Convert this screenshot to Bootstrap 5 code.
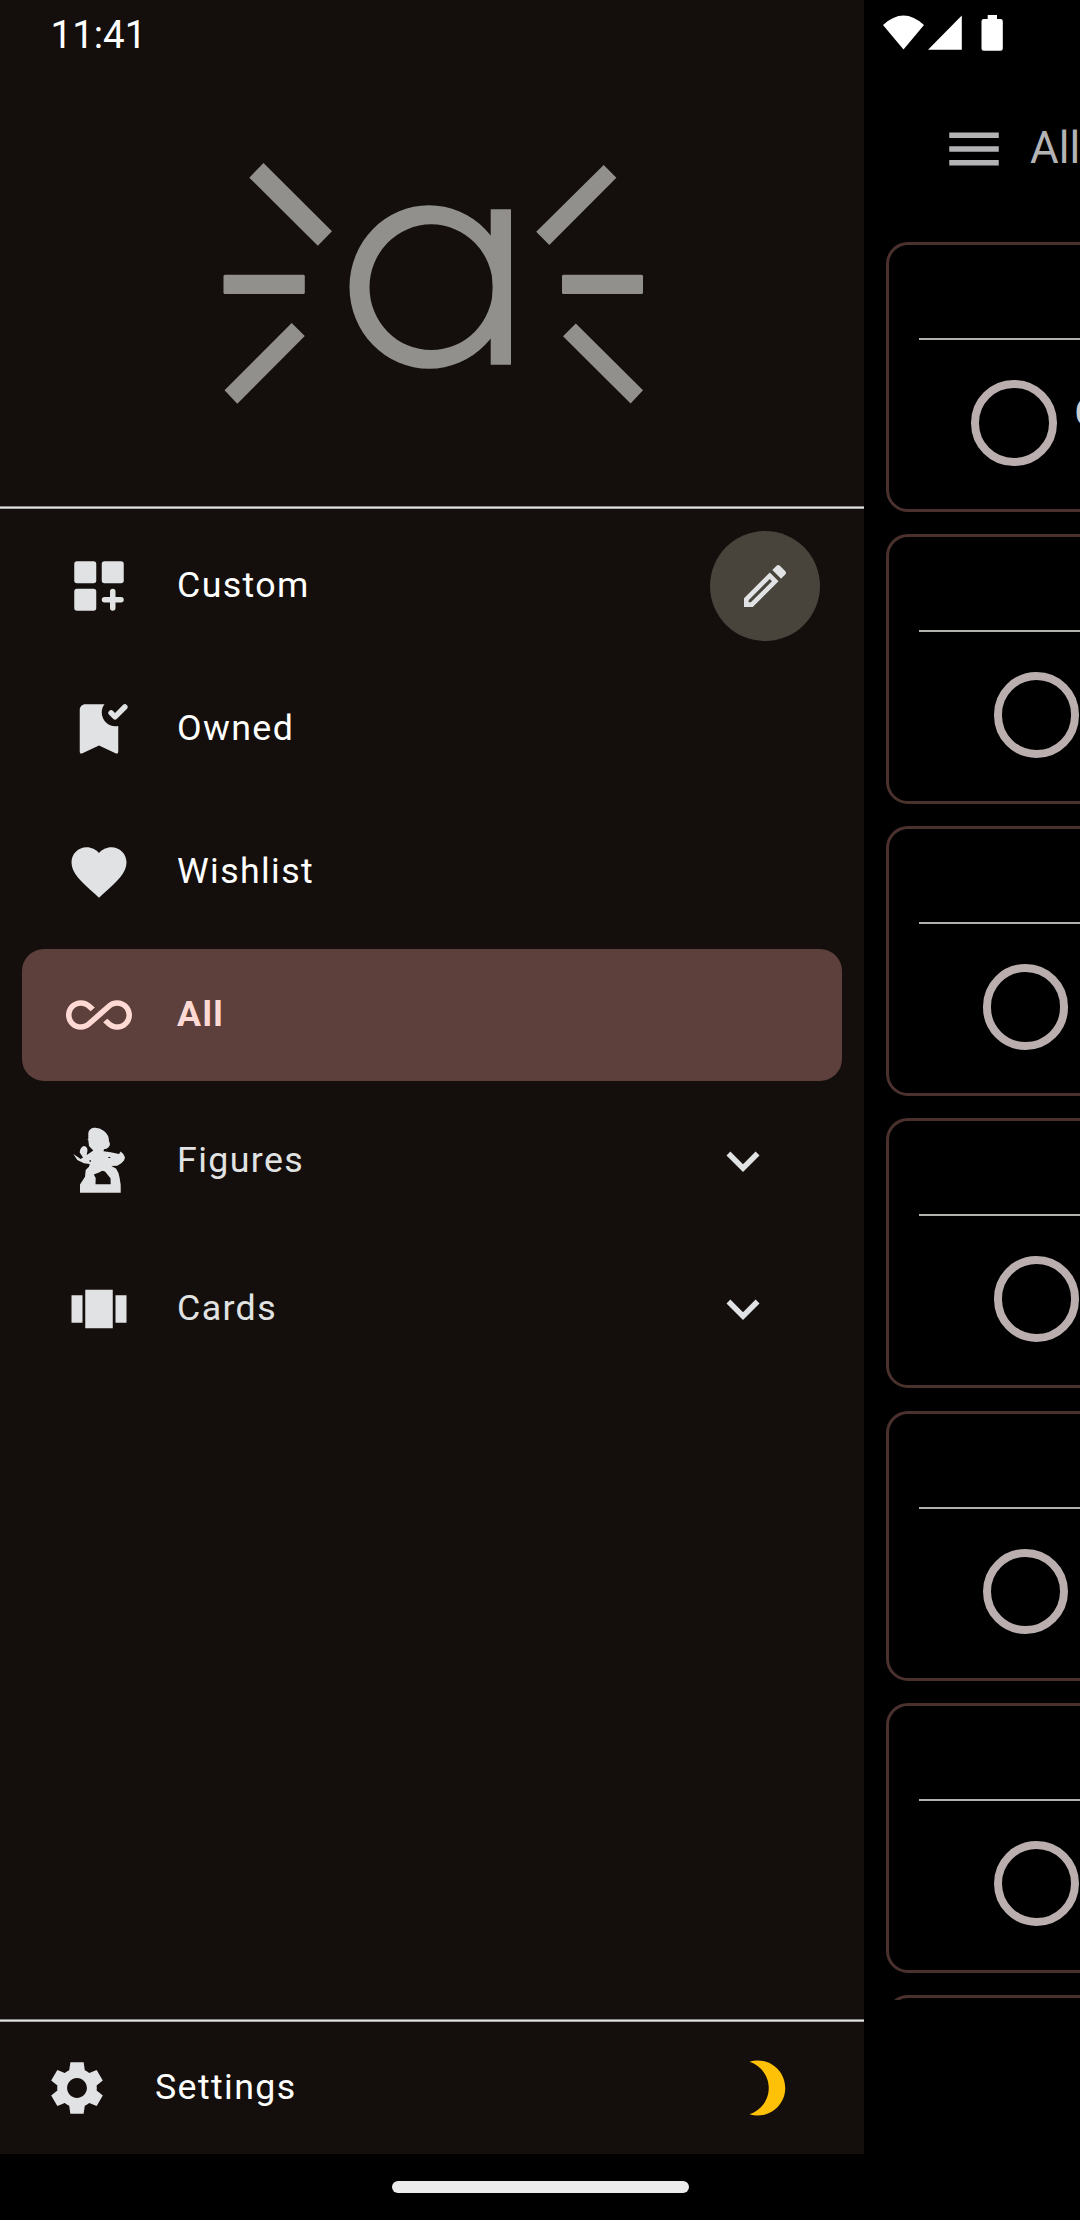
<!DOCTYPE html>
<html lang="en">
<head>
<meta charset="utf-8">
<meta name="viewport" content="width=device-width, initial-scale=1">
<title>Collection</title>
<link href="https://cdn.jsdelivr.net/npm/bootstrap@5.3.0/dist/css/bootstrap.min.css" rel="stylesheet">
<style>
body{background:#000;font-family:Roboto,"Liberation Sans",sans-serif;color:#fff}
.screen{width:1080px;height:2220px}
.drawer{width:864px;height:2154px;background:linear-gradient(90deg,#140f0c 0,#140f0c 834px,#140e0d 838px)}
.status-time{height:66px;padding:2px 0 0 50.5px;font-size:38.5px;line-height:66px}
.brand{height:440px}
.brand svg{width:864px;height:440px}
.rule{height:3px;flex:none;background:linear-gradient(#8a8886 0 1px,#e3e3e5 1px 2px,#a5a5a3 2px 3px)}
.menu{padding:11px 22px 0}
.menu-row{height:132px;margin-bottom:11px;padding:0 22px 0 44px;border-radius:22px;font-size:35.75px;letter-spacing:1.375px;line-height:44px}
.menu-row.is-on{background:#5d403b;color:#ffdad4;font-weight:700}
.menu-row.is-on .ico{fill:#ffdad4}
.menu-groups{margin-top:-5px}
.menu-group{height:148px;padding:0 66px 0 44px;font-size:35.75px;letter-spacing:1.375px;line-height:44px;color:#e1e3e3}
.ico{width:66px;height:66px;fill:#e1e2e4;flex:none}
.label{margin:0 0 2px 45px}
.foot .label{margin-bottom:0}
.edit-btn{width:110px;height:110px;background:#48443c}
.edit-btn .ico{width:56px;height:56px}
.foot{height:132px;padding:0 65px 0 44px;font-size:35.75px;letter-spacing:1.375px}
.moon{fill:#ffc107}
.behind{width:216px;height:2000px}
.sys{height:66px;padding:15px 0 0 19px}
.topbar{height:176px;padding:0 0 11px 77px;color:#b3b3b6;font-size:44px}
.topbar svg{width:66px;height:66px;fill:#b3b3b6}
.topbar span{margin:0 0 2px 23px}
.entry{width:400px;height:270px;flex:none;margin:0 0 22.15px 22px;border:3px solid #4a312e;border-radius:22px}
.entry-head{height:95px;margin:0 30px;border-bottom:2px solid #b1b1ad}
.ring{width:85.5px;height:85.5px;border:8.5px solid #baaeae;margin:40px 0 0 104.5px}
.in-a .ring{margin-left:82px}
.in-b .ring{margin-left:93.5px}
.code{margin:40px 0 0 18.5px;font-size:38px;font-weight:700;line-height:66px;color:#cfcfcf}
.navbar-sys{height:66px}
.pill{width:297px;height:12px;background:#ececec}
</style>
<script src="https://cdn.jsdelivr.net/npm/bootstrap@5.3.0/dist/js/bootstrap.bundle.min.js"></script>
</head>
<body>
<div class="screen overflow-hidden d-flex flex-column">
 <div class="d-flex">
  <aside class="drawer d-flex flex-column flex-shrink-0">
   <div class="status-time flex-shrink-0">11:41</div>
   <div class="brand flex-shrink-0">
    <svg viewBox="0 66 864 440" fill="#91908d" class="d-block">
     <path d="M263.5 163 332 231.3 317.8 245.7 249.3 177.7zM291.7 323 304.8 336 237.3 403.7 224.5 390.3zM603.7 165 616.4 177.7 549.3 245 536.2 231.7zM575.8 323.5 643 390.3 630.6 403.5 563 336.3z"/>
     <rect x="223.5" y="274.7" width="81.3" height="19.2" rx="1.5"/><rect x="562" y="274.7" width="81" height="19.2" rx="1.5"/>
     <path fill-rule="evenodd" d="M349.5 287a79.5 81.7 0 0 1 159 0 79.5 81.7 0 0 1-159 0zm20 .2a61.7 62.9 0 0 0 123.4 0 61.7 62.9 0 0 0-123.4 0z"/>
     <path d="M490.7 209.3H511v155.4h-20.3V310q4-22 0-46z"/>
    </svg>
   </div>
   <div class="rule"></div>
   <nav class="menu flex-grow-1">
    <div class="menu-row d-flex align-items-center">
     <svg class="ico" viewBox="0 0 24 24"><rect x="3" y="3" width="8" height="8" rx="1"/><rect x="13" y="3" width="8" height="8" rx="1"/><rect x="3" y="13" width="8" height="8" rx="1"/><path d="M17 14v6M14 17h6" stroke="#e1e2e4" stroke-width="2" stroke-linecap="round"/></svg>
     <span class="label">Custom</span>
     <span class="edit-btn rounded-circle d-flex align-items-center justify-content-center ms-auto me-n3"><svg class="ico" viewBox="0 0 24 24"><path d="M14.06 9.02l.92.92L5.92 19H5v-.92l9.06-9.06M17.66 3c-.25 0-.51.1-.7.29l-1.83 1.83 3.75 3.75 1.83-1.83c.39-.39.39-1.02 0-1.41l-2.34-2.34c-.2-.2-.45-.29-.71-.29zm-3.6 3.19L3 17.25V21h3.75L17.81 9.94l-3.75-3.75z"/></svg></span>
    </div>
    <div class="menu-row d-flex align-items-center">
     <svg class="ico" viewBox="0 0 24 24"><path d="M19 10.900V20.250Q19 21.250 18 20.800L12 18 6 20.800Q5 21.250 5 20.250V5c0-1.100.9-2 2-2h7c-.63.84-1 1.870-1 3 0 2.760 2.240 5 5 5 .34 0 .68-.03 1-.1z"/><path d="M16.400 6.150 17.830 7.580 21.400 4" fill="none" stroke="#e1e2e4" stroke-width="2" stroke-linecap="round" stroke-linejoin="round"/></svg>
     <span class="label">Owned</span>
    </div>
    <div class="menu-row d-flex align-items-center">
     <svg class="ico" viewBox="0 0 24 24"><path d="M12 21.350l-1.450-1.320C5.400 15.360 2 12.280 2 8.500 2 5.420 4.420 3 7.500 3c1.740 0 3.410.81 4.500 2.090C13.090 3.810 14.760 3 16.500 3 19.580 3 22 5.420 22 8.500c0 3.780-3.400 6.860-8.550 11.540L12 21.350z"/></svg>
     <span class="label">Wishlist</span>
    </div>
    <div class="menu-row is-on d-flex align-items-center">
     <svg class="ico" viewBox="0 0 24 24"><path d="M18.600 6.620c-1.440 0-2.800.56-3.770 1.530L12 10.660 10.480 12h.01L7.800 14.390c-.64.64-1.490.99-2.400.99-1.870 0-3.390-1.510-3.390-3.380S3.530 8.620 5.400 8.620c.91 0 1.760.35 2.440 1.030l1.130 1 1.510-1.340L9.220 8.200C8.200 7.180 6.840 6.620 5.400 6.620 2.420 6.620 0 9.040 0 12s2.420 5.380 5.400 5.380c1.440 0 2.800-.56 3.770-1.530l2.830-2.500.01.01L13.520 12h-.01l2.690-2.390c.64-.64 1.490-.99 2.400-.99 1.870 0 3.390 1.510 3.390 3.380s-1.520 3.380-3.390 3.380c-.9 0-1.760-.35-2.440-1.030l-1.140-1.010-1.510 1.340 1.270 1.120c1.020 1.010 2.370 1.570 3.820 1.570 2.980 0 5.400-2.410 5.400-5.380s-2.420-5.370-5.400-5.370z"/></svg>
     <span class="label">All</span>
    </div>
    <div class="menu-groups">
    <div class="menu-group d-flex align-items-center">
     <svg class="ico overflow-visible" viewBox="66 1128 66 66"><path fill-rule="evenodd" d="M88.300 1133Q89 1128.500 94 1127.800Q99 1127.300 104 1131Q109 1135 109 1141L110 1144Q109.500 1148.500 104 1149.300L103.500 1151.300L110.700 1152.300L119 1154L120.700 1151.500L123.300 1154L125 1157.500L124 1160.500L121.300 1163.300L117.300 1165.800L111.300 1166L116 1168.500Q119.300 1173 119.700 1178.300L120.700 1185V1192.800H80V1184.500L85 1176.700L85.700 1170L89 1166.700L89.700 1164L84 1163.300L77.300 1160L73.300 1154L80.700 1159L83 1157.500L79.700 1152.500Q80 1147 84 1146Q87.500 1146.500 87.500 1150.500L86.700 1155L89 1153.500L93.300 1150.500L89 1146L88.300 1140L87.300 1139H88.300zM93.800 1174.500L95.700 1178L95.500 1184.300H110.700L110.500 1178.300L105 1171.500L102.300 1170.800L99 1172.500zM89.500 1160.300h1.500v1.500h-1.500zM108.300 1157h2v1h-2z"/></svg>
     <span class="label">Figures</span>
     <svg class="ico ms-auto" viewBox="0 0 24 24"><path d="M16.590 8.590 12 13.170 7.410 8.590 6 10l6 6 6-6z"/></svg>
    </div>
    <div class="menu-group d-flex align-items-center">
     <svg class="ico" viewBox="0 0 24 24"><path d="M2 7h4v10H2zM7 5h10v14H7zM18 7h4v10h-4z"/></svg>
     <span class="label">Cards</span>
     <svg class="ico ms-auto" viewBox="0 0 24 24"><path d="M16.590 8.590 12 13.170 7.410 8.590 6 10l6 6 6-6z"/></svg>
    </div>
    </div>
   </nav>
   <div class="rule"></div>
   <div class="foot d-flex align-items-center flex-shrink-0">
    <svg class="ico" viewBox="0 0 24 24"><path d="M19.140 12.940c.04-.3.06-.61.06-.94 0-.32-.02-.64-.07-.94l2.250-1.750-2.240-3.870-2.670 1.070c-.5-.38-1.030-.7-1.620-.94l-.43-2.950H9.610l-.45 2.950c-.59.24-1.130.57-1.620.94L4.850 5.440 2.610 9.310l2.280 1.750c-.05.3-.09.63-.09.94s.02.64.07.94l-2.260 1.750 2.240 3.870 2.690-1.070c.5.38 1.030.7 1.620.94l.43 2.950h4.810l.44-2.950c.59-.24 1.130-.56 1.620-.94l2.690 1.070 2.240-3.870zM12 15.600c-1.980 0-3.600-1.620-3.600-3.600s1.620-3.600 3.600-3.600 3.600 1.620 3.600 3.600-1.620 3.600-3.600 3.600z"/></svg>
    <span class="label">Settings</span>
    <svg class="ico moon ms-auto" viewBox="0 0 24 24"><path d="M9 2c-1.050 0-2.050.16-3 .46 4.060 1.270 7 5.060 7 9.540 0 4.480-2.940 8.270-7 9.540.95.3 1.950.46 3 .46 5.520 0 10-4.480 10-10S14.520 2 9 2z"/></svg>
   </div>
  </aside>
  <main class="behind overflow-hidden d-flex flex-column">
   <div class="sys flex-shrink-0">
    <svg class="d-block" width="121" height="36" viewBox="883 15 121 36" fill="#fff"><path d="M883 25Q903.500 6 924 25L903.500 49.500zM928 49.700 961.800 15.500V49.700zM987.700 15H997v4h3.500q2.300 0 2.300 2.300V48.400q0 2.300-2.300 2.300H983.800q-2.300 0-2.300-2.300V21.300q0-2.300 2.300-2.300h3.900z"/></svg>
   </div>
   <div class="topbar d-flex align-items-center flex-shrink-0">
    <svg viewBox="0 0 24 24" class="flex-shrink-0"><path d="M3 18h18v-2H3zM3 13h18v-2H3zM3 6v2h18V6z"/></svg><span>All</span>
   </div>
   <div class="entry in-a"><div class="entry-head"></div><div class="d-flex"><div class="ring rounded-circle flex-shrink-0"></div><span class="code">C</span></div></div>
   <div class="entry"><div class="entry-head"></div><div class="ring rounded-circle"></div></div>
   <div class="entry in-b"><div class="entry-head"></div><div class="ring rounded-circle"></div></div>
   <div class="entry"><div class="entry-head"></div><div class="ring rounded-circle"></div></div>
   <div class="entry in-b"><div class="entry-head"></div><div class="ring rounded-circle"></div></div>
   <div class="entry"><div class="entry-head"></div><div class="ring rounded-circle"></div></div>
   <div class="entry"></div>
  </main>
 </div>
 <div class="navbar-sys d-flex align-items-center justify-content-center"><div class="pill rounded-pill"></div></div>
</div>
</body>
</html>
